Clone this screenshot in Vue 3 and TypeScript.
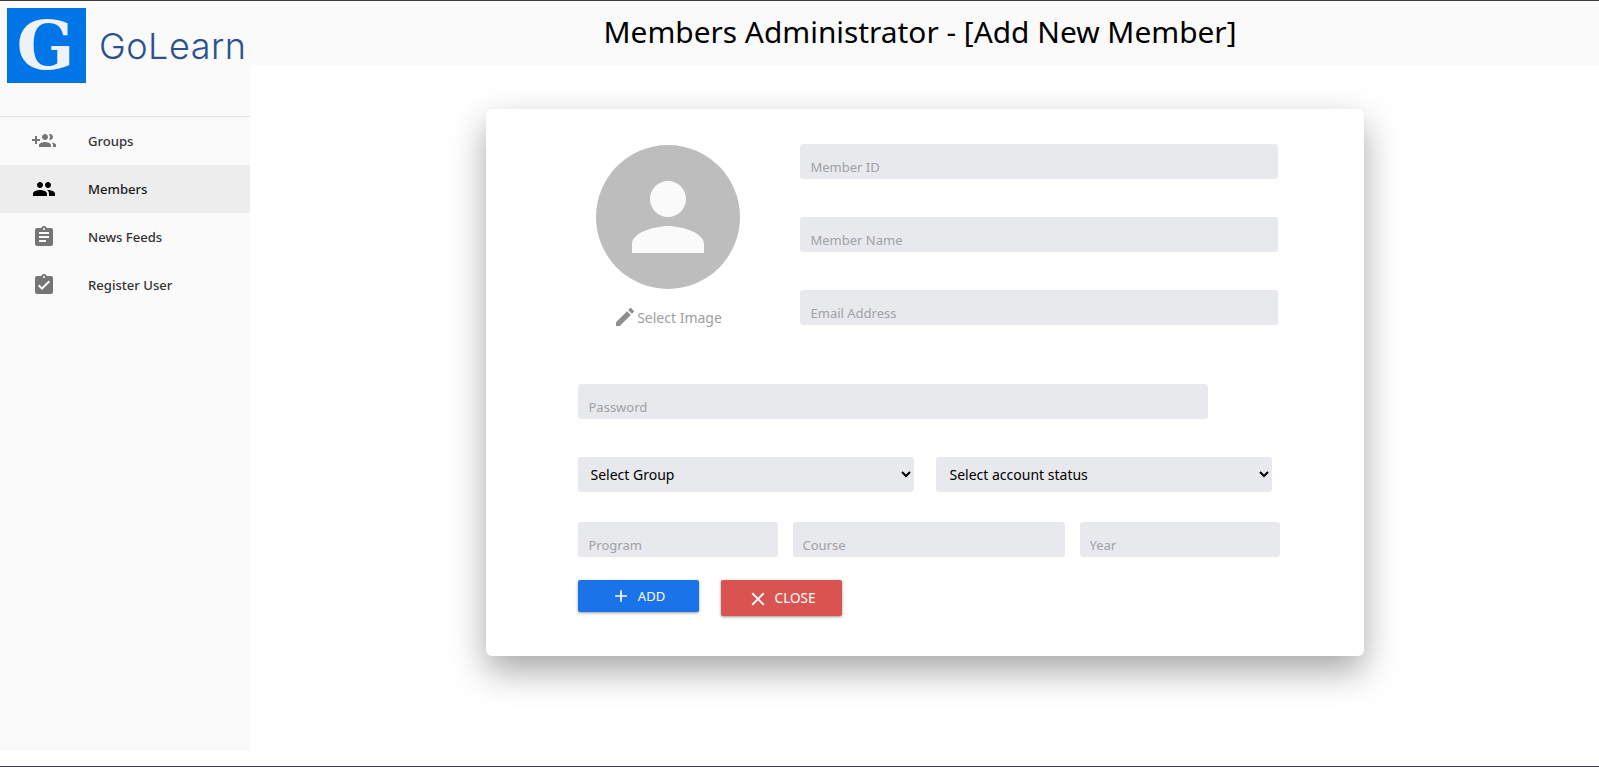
<script setup lang="ts">
interface NavItem { label: string; path: string; active?: boolean }
const nav: NavItem[] = [
  { label: 'Groups', path: 'M8 10H5V7H3v3H0v2h3v3h2v-3h3v-2zm10 1c1.66 0 2.99-1.34 2.99-3S19.66 5 18 5c-.32 0-.63.05-.91.14.57.81.9 1.79.9 2.86s-.34 2.04-.9 2.86c.28.09.59.14.91.14zm-5 0c1.66 0 2.99-1.34 2.99-3S14.66 5 13 5s-3 1.34-3 3 1.34 3 3 3zm6.62 2.16c.83.73 1.38 1.66 1.38 2.84v2h3v-2c0-1.54-2.37-2.49-4.38-2.84zM13 13c-2 0-6 1-6 3v2h12v-2c0-2-4-3-6-3z' },
  { label: 'Members', active: true, path: 'M16 11c1.66 0 2.99-1.34 2.99-3S17.66 5 16 5c-1.66 0-3 1.34-3 3s1.34 3 3 3zm-8 0c1.66 0 2.99-1.34 2.99-3S9.66 5 8 5C6.34 5 5 6.34 5 8s1.34 3 3 3zm0 2c-2.33 0-7 1.17-7 3.5V19h14v-2.5c0-2.33-4.67-3.5-7-3.5zm8 0c-.29 0-.62.02-.97.05 1.16.84 1.97 1.97 1.97 3.45V19h6v-2.5c0-2.33-4.67-3.5-7-3.5z' },
  { label: 'News Feeds', path: 'M19 3h-4.18C14.4 1.84 13.3 1 12 1c-1.3 0-2.4.84-2.82 2H5c-1.1 0-2 .9-2 2v14c0 1.1.9 2 2 2h14c1.1 0 2-.9 2-2V5c0-1.1-.9-2-2-2zm-7 0c.55 0 1 .45 1 1s-.45 1-1 1-1-.45-1-1 .45-1 1-1zm2 14H7v-2h7v2zm3-4H7v-2h10v2zm0-4H7V7h10v2z' },
  { label: 'Register User', path: 'M19 3h-4.18C14.4 1.84 13.3 1 12 1c-1.3 0-2.4.84-2.82 2H5c-1.1 0-2 .9-2 2v14c0 1.1.9 2 2 2h14c1.1 0 2-.9 2-2V5c0-1.1-.9-2-2-2zm-7 0c.55 0 1 .45 1 1s-.45 1-1 1-1-.45-1-1 .45-1 1-1zm-2 14l-4-4 1.41-1.41L10 14.17l6.59-6.59L18 9l-8 8z' },
]
</script>

<template>
  <div class="page">
    <aside class="sidebar">
      <div class="brand">
        <div class="logo"><span>G</span></div>
        <span class="brand-name">GoLearn</span>
      </div>
      <nav class="nav">
        <a v-for="item in nav" :key="item.label" class="nav-item" :class="{ active: item.active }">
          <svg class="nav-icon" viewBox="0 0 24 24"><path :d="item.path" /></svg>
          <span>{{ item.label }}</span>
        </a>
      </nav>
    </aside>
    <main class="main">
      <header class="header">Members Administrator - [Add New Member]</header>
      <section class="card">
        <div class="top">
          <div class="photo">
            <div class="avatar">
              <svg viewBox="0 0 24 24"><path d="M12 12c2.21 0 4-1.79 4-4s-1.79-4-4-4-4 1.79-4 4 1.79 4 4 4zm0 2c-2.67 0-8 1.34-8 4v2h16v-2c0-2.66-5.33-4-8-4z" /></svg>
            </div>
            <div class="select-image">
              <svg viewBox="0 0 24 24"><path d="M3 17.25V21h3.75L17.81 9.94l-3.75-3.75L3 17.25zM20.71 7.04c.39-.39.39-1.02 0-1.41l-2.34-2.34c-.39-.39-1.02-.39-1.41 0l-1.83 1.83 3.75 3.75 1.83-1.83z" /></svg>
              <span>Select Image</span>
            </div>
          </div>
          <div class="identity">
            <input class="field" placeholder="Member ID" />
            <input class="field" placeholder="Member Name" />
            <input class="field" placeholder="Email Address" />
          </div>
        </div>
        <input class="field password" placeholder="Password" />
        <div class="selects">
          <select class="field choice group"><option>Select Group</option></select>
          <select class="field choice status"><option>Select account status</option></select>
        </div>
        <div class="triple">
          <input class="field program" placeholder="Program" />
          <input class="field course" placeholder="Course" />
          <input class="field year" placeholder="Year" />
        </div>
        <div class="actions">
          <button class="btn add">
            <svg viewBox="0 0 24 24"><path d="M19 13h-6v6h-2v-6H5v-2h6V5h2v6h6v2z" /></svg>
            <span>ADD</span>
          </button>
          <button class="btn close">
            <svg viewBox="0 0 24 24"><path d="M19 6.41L17.59 5 12 10.59 6.41 5 5 6.41 10.59 12 5 17.59 6.41 19 12 13.41 17.59 19 19 17.59 13.41 12z" /></svg>
            <span>CLOSE</span>
          </button>
        </div>
      </section>
    </main>
  </div>
</template>

<style scoped>
.page {
  box-sizing: border-box;
  width: 1599px;
  height: 767px;
  display: flex;
  align-items: flex-start;
  overflow: hidden;
  background: #fff;
  border-top: 1px solid #3d3d45;
  border-bottom: 1px solid #3d3d45;
  font-family: "Noto Sans", sans-serif;
}
.sidebar {
  width: 250px;
  height: 750px;
  flex: none;
  background: #fafafa;
}
.brand {
  height: 116px;
  box-sizing: border-box;
  padding: 7px 0 0 7px;
  display: flex;
  align-items: flex-start;
  border-bottom: 1px solid #e0e0e0;
}
.logo {
  width: 79px;
  height: 75px;
  padding-right: 2px;
  box-sizing: border-box;
  background: #0075e8;
  display: flex;
  align-items: center;
  justify-content: center;
}
.logo span {
  font-family: "DejaVu Serif", serif;
  font-weight: 700;
  font-size: 68px;
  line-height: 75px;
  color: #eef1f6;
}
.brand-name {
  margin: 16px 0 0 13px;
  font-family: Inter, sans-serif;
  font-size: 36px;
  line-height: 44px;
  font-weight: 300;
  letter-spacing: 0.5px;
  color: #2a5290;
}
.nav-item {
  height: 48px;
  display: flex;
  align-items: center;
  padding-left: 32px;
  gap: 32px;
  font-size: 13.1px;
  font-weight: 500;
  color: #333;
}
.nav-item.active {
  background: #ededed;
  color: #1a1a1a;
}
.nav-icon {
  width: 24px;
  height: 24px;
  fill: #757575;
}
.active .nav-icon {
  fill: #000;
}
.main {
  flex: 1;
  min-width: 0;
}
.header {
  box-sizing: border-box;
  height: 64px;
  padding-right: 9px;
  background: #fafafa;
  text-align: center;
  font-size: 29.85px;
  line-height: 61px;
  color: #000;
}
.card {
  box-sizing: border-box;
  width: 878px;
  height: 547px;
  margin: 44px auto 0;
  padding: 35px 0 0 92px;
  background: #fff;
  border-radius: 6px;
  box-shadow: 0 15px 35px rgba(0, 0, 0, 0.35);
}
.top {
  display: flex;
  gap: 42px;
}
.photo {
  width: 180px;
  display: flex;
  flex-direction: column;
  align-items: center;
}
.avatar {
  width: 144px;
  height: 144px;
  margin-top: 1px;
  border-radius: 50%;
  background: #bdbdbd;
  display: flex;
  align-items: center;
  justify-content: center;
}
.avatar svg {
  width: 108px;
  height: 108px;
  fill: #fafafa;
}
.select-image {
  margin-top: 16px;
  display: flex;
  align-items: center;
  font-size: 14px;
  color: #9e9e9e;
}
.select-image svg {
  width: 24px;
  height: 24px;
  fill: #8e8e8e;
}
.identity {
  display: flex;
  flex-direction: column;
  gap: 38px;
}
.field {
  box-sizing: border-box;
  display: block;
  height: 35px;
  border: none;
  outline: none;
  border-radius: 3px;
  background: #e8e9ed;
  padding: 10px 10px 0 11px;
  font-family: "Noto Sans", sans-serif;
  font-size: 13px;
  color: #000;
}
.field::placeholder {
  color: #a0a0a6;
}
.identity .field {
  width: 478px;
}
.password {
  width: 630px;
  margin-top: 55px;
}
.selects {
  display: flex;
  margin-top: 38px;
  gap: 22px;
}
.choice {
  padding: 0 8px 0 9px;
  font-size: 14px;
}
.group { width: 336px; }
.status { width: 336px; padding-left: 10px; }
.triple {
  display: flex;
  gap: 15px;
  margin-top: 30px;
}
.program { width: 200px; }
.course { width: 272px; padding-left: 10px; }
.year { width: 200px; padding-left: 10px; }
.actions {
  display: flex;
  align-items: flex-start;
  gap: 22px;
  margin-top: 23px;
}
.btn {
  box-sizing: border-box;
  width: 121px;
  display: flex;
  align-items: center;
  justify-content: center;
  border: none;
  border-radius: 2px;
  padding: 0;
  color: #fff;
  font-family: "Noto Sans", sans-serif;
  box-shadow: 0 1px 3px rgba(0, 0, 0, 0.4);
}
.btn svg { fill: #fff; }
.add {
  height: 32px;
  background: #1a73e8;
  font-size: 13px;
  gap: 7px;
}
.add svg { width: 20px; height: 20px; }
.close {
  height: 36px;
  background: #d95450;
  font-size: 13.5px;
  gap: 6px;
}
.close svg { width: 22px; height: 22px; margin-top: 2px; }
</style>
